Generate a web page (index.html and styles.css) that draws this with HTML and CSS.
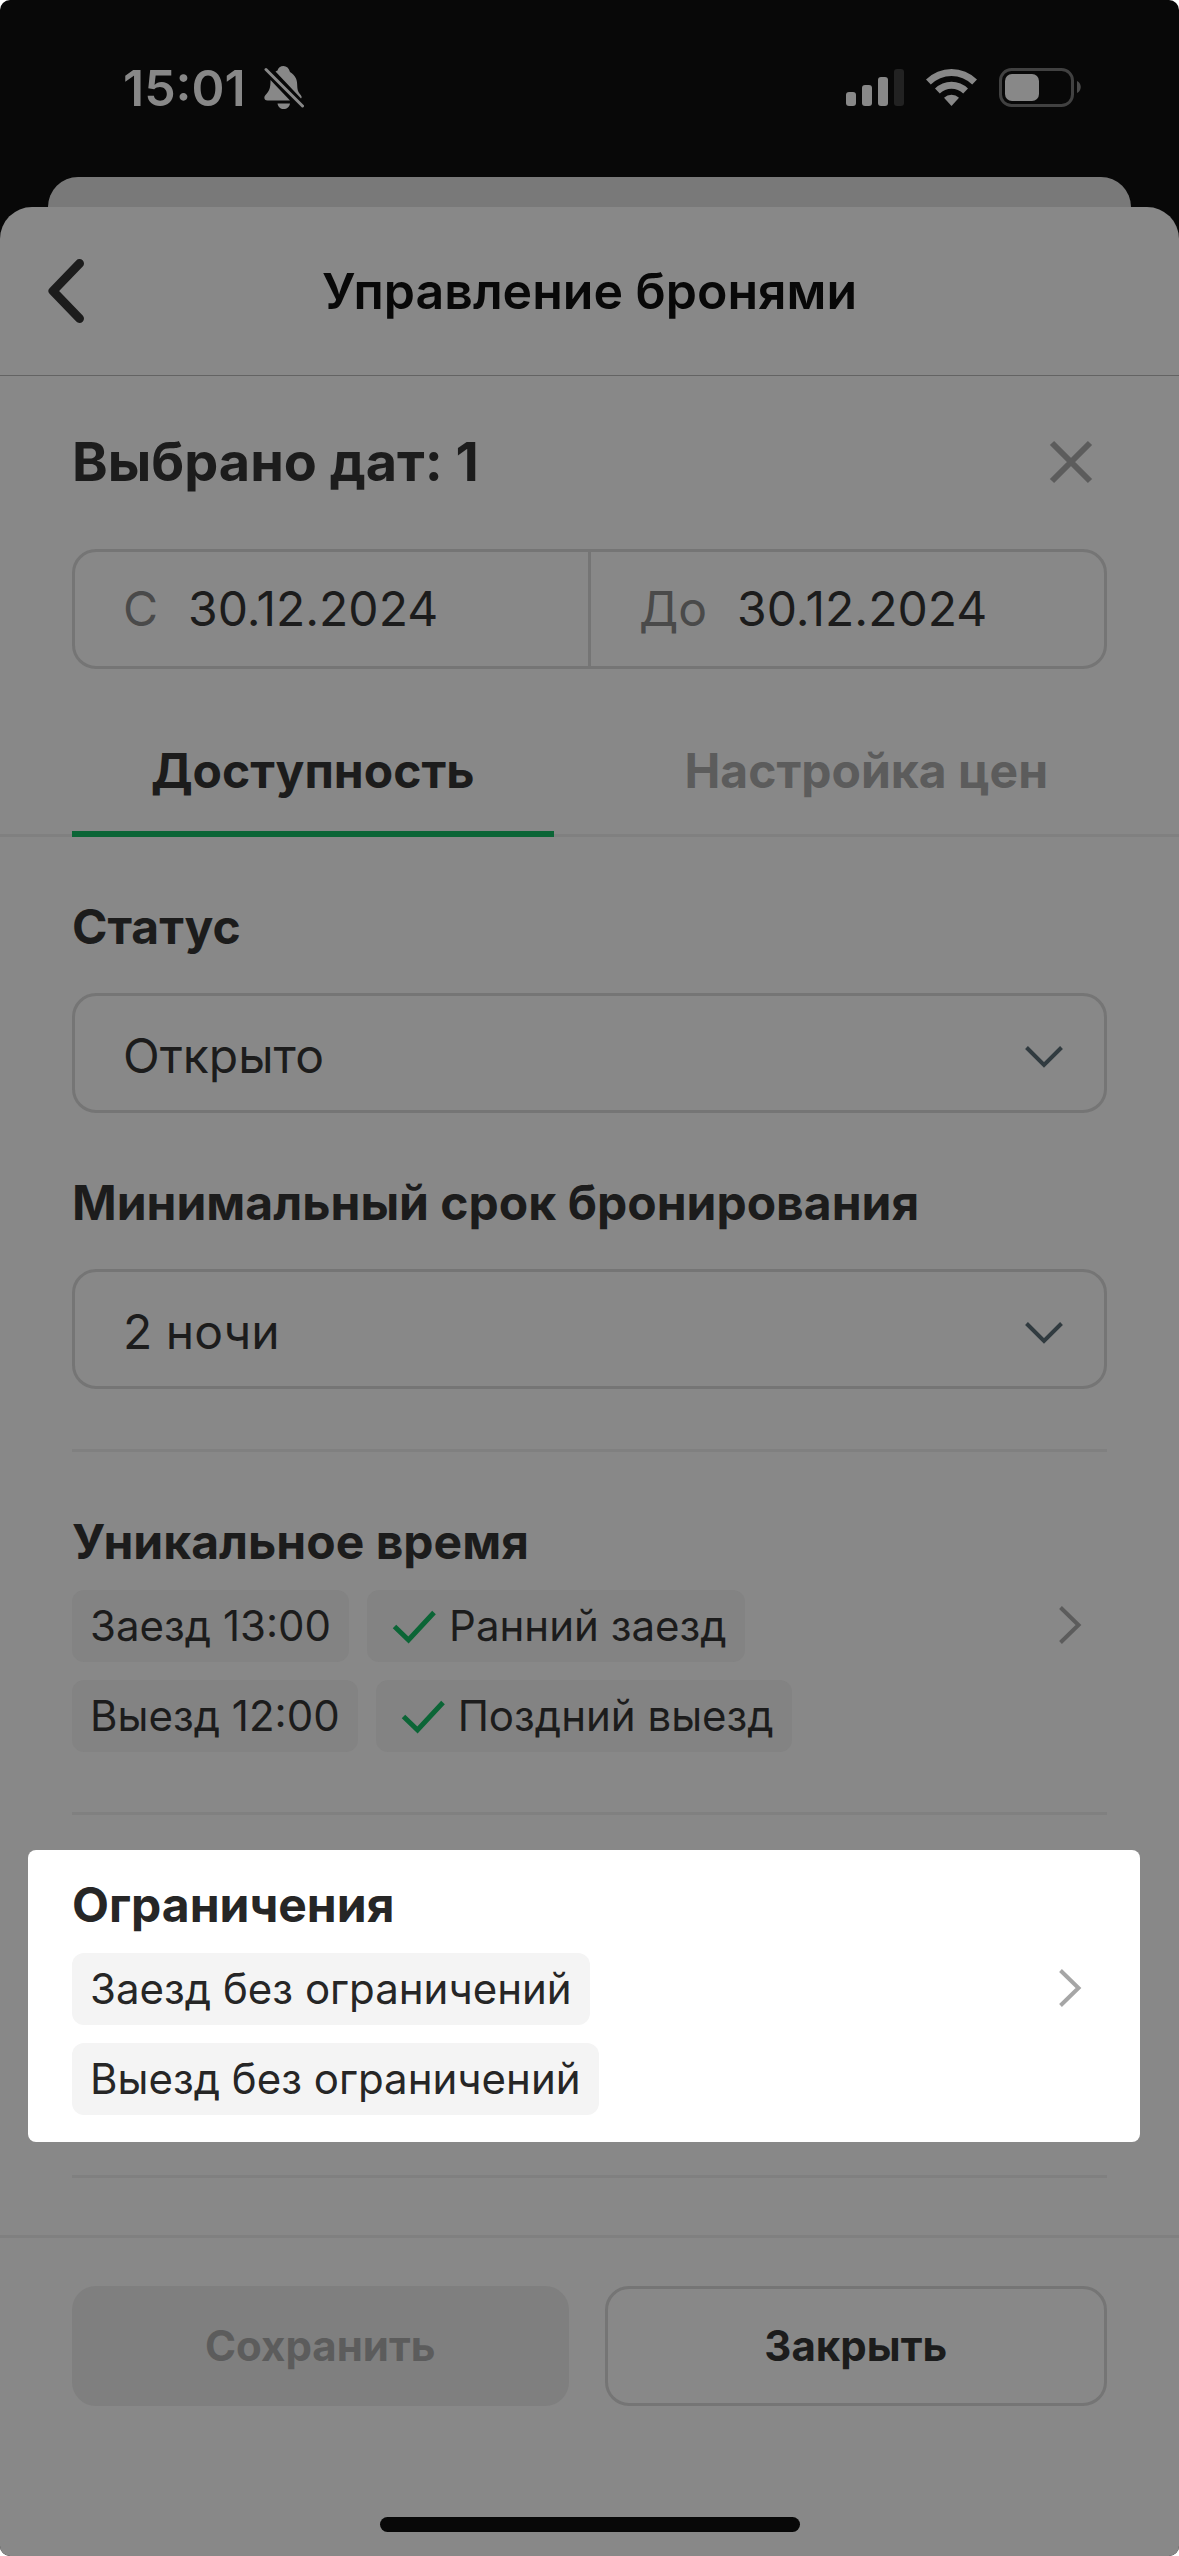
FILE: index.html
```
<!DOCTYPE html>
<html lang="ru">
<head>
    <meta charset="UTF-8">
    <meta name="viewport" content="width=device-width, initial-scale=1.0">
    <title>Управление бронями</title>
    <link rel="stylesheet" href="styles.css">
</head>
<body>
    <div class="screen">
        <div class="status-bar">
            <div class="status-left">
                <span class="clock">15:01</span>
                <svg class="bell" width="40" height="44" viewBox="0 0 40 44">
                    <path d="M19.500 0c-3 0-5.500 2-6 4.500l-2 1L37 32.500c2-2-1-4-2.500-6.500-2-4-.5-9-2.500-13.500-1.300-3-3.500-5-6-6.500C25 2 22.500 0 19.500 0zM6.500 14L26 34.500H3.500C0 34.500-.5 31 1.500 29c4-4 5-7 5-15zM13.500 37.500h12.500c-.5 3.500-3 5.500-6.300 5.500s-5.700-2-6.200-5.500z" fill="currentColor"/>
                    <path d="M2 3l36.500 37.500" stroke="#080808" stroke-width="7"/>
                    <path d="M2 3.500l36.500 36.500" stroke="currentColor" stroke-width="3" stroke-linecap="round"/>
                </svg>
            </div>
            <div class="status-right">
                <svg width="58" height="40" viewBox="0 0 58 40">
                    <rect x="0" y="24" width="10" height="14" rx="3" fill="currentColor"/>
                    <rect x="16" y="17" width="10" height="21" rx="3" fill="currentColor"/>
                    <rect x="32" y="9" width="10" height="29" rx="3" fill="currentColor"/>
                    <rect x="48" y="1" width="10" height="37" rx="3" fill="#222"/>
                </svg>
                <svg width="51" height="40" viewBox="0 0 51 40">
                    <path d="M0 11.500a36 36 0 0 1 51 0l-4.800 5a29.500 29.500 0 0 0-41.400 0z" fill="currentColor"/>
                    <path d="M9 20.500a23.500 23.500 0 0 1 33 0l-4.800 5a16.500 16.500 0 0 0-23.400 0z" fill="currentColor"/>
                    <path d="M18 29.800a10.800 10.800 0 0 1 15 0L25.500 38z" fill="currentColor"/>
                </svg>
                <svg width="83" height="40" viewBox="0 0 83 40">
                    <rect x="1.500" y="1.500" width="72" height="36" rx="11" fill="none" stroke="#414141" stroke-width="3"/>
                    <rect x="6" y="6" width="34" height="27" rx="7" fill="currentColor"/>
                    <path d="M78 13c5 2 5 10 0 12z" fill="#4a4a4a"/>
                </svg>
            </div>
        </div>

        <div class="sheet-back"></div>
        <main class="sheet">
            <header class="sheet-header">
                <button class="back-button" aria-label="Назад">
                    <svg width="36" height="64" viewBox="0 0 36 64">
                        <path d="M31.500 4.500L5 32l26.500 27.500" fill="none" stroke="currentColor" stroke-width="9" stroke-linecap="round" stroke-linejoin="round"/>
                    </svg>
                </button>
                <h1>Управление бронями</h1>
            </header>

            <div class="selection">
                <div class="selection-title">
                    <h2>Выбрано дат: 1</h2>
                    <button class="icon-button close-icon" aria-label="Сбросить">
                        <svg width="72" height="72" viewBox="0 0 72 72">
                            <path d="M17 17l38 38M55 17L17 55" fill="none" stroke="currentColor" stroke-width="6"/>
                        </svg>
                    </button>
                </div>
                <div class="dates">
                    <div class="date">
                        <label for="dateFrom">С</label>
                        <input type="text" id="dateFrom" value="30.12.2024">
                    </div>
                    <div class="date">
                        <label for="dateTo">До</label>
                        <input type="text" id="dateTo" value="30.12.2024">
                    </div>
                </div>
            </div>

            <div class="tabs">
                <button class="tab active">Доступность</button>
                <button class="tab">Настройка цен</button>
            </div>

            <div class="content">
                <div class="field">
                    <label for="status">Статус</label>
                    <div class="select">
                        <select id="status">
                            <option>Открыто</option>
                        </select>
                        <svg class="arrow" width="38" height="22" viewBox="0 0 38 22">
                            <path d="M1.500 1.500L19 19 36.500 1.500" fill="none" stroke="currentColor" stroke-width="4"/>
                        </svg>
                    </div>
                </div>
                <div class="field">
                    <label for="minStay">Минимальный срок бронирования</label>
                    <div class="select">
                        <select id="minStay">
                            <option>2 ночи</option>
                        </select>
                        <svg class="arrow" width="38" height="22" viewBox="0 0 38 22">
                            <path d="M1.500 1.500L19 19 36.500 1.500" fill="none" stroke="currentColor" stroke-width="4"/>
                        </svg>
                    </div>
                </div>

                <section class="row">
                    <div class="row-text">
                        <h3>Уникальное время</h3>
                        <div class="chips">
                            <span class="chip">Заезд 13:00</span>
                            <span class="chip">
                                <svg class="check" width="60" height="60" viewBox="0 0 60 60">
                                    <path d="M9.500 30.500L23.500 44 49 16.500" fill="none" stroke="currentColor" stroke-width="5"/>
                                </svg>
                                Ранний заезд
                            </span>
                        </div>
                        <div class="chips">
                            <span class="chip">Выезд 12:00</span>
                            <span class="chip">
                                <svg class="check" width="60" height="60" viewBox="0 0 60 60">
                                    <path d="M9.500 30.500L23.500 44 49 16.500" fill="none" stroke="currentColor" stroke-width="5"/>
                                </svg>
                                Поздний выезд
                            </span>
                        </div>
                    </div>
                    <button class="icon-button" aria-label="Уникальное время">
                        <svg width="72" height="72" viewBox="0 0 72 72">
                            <path d="M25.500 11.500L43.500 29 25.500 46.500" fill="none" stroke="currentColor" stroke-width="4"/>
                        </svg>
                    </button>
                </section>

                <section class="row spotlight">
                    <div class="row-text">
                        <h3>Ограничения</h3>
                        <div class="chips">
                            <span class="chip">Заезд без ограничений</span>
                        </div>
                        <div class="chips">
                            <span class="chip">Выезд без ограничений</span>
                        </div>
                    </div>
                    <button class="icon-button" aria-label="Ограничения">
                        <svg width="72" height="72" viewBox="0 0 72 72">
                            <path d="M25.500 11.500L43.500 29 25.500 46.500" fill="none" stroke="currentColor" stroke-width="4"/>
                        </svg>
                    </button>
                </section>
            </div>

            <footer class="sheet-footer">
                <div class="actions">
                    <button class="save-button" disabled>Сохранить</button>
                    <button class="cancel-button">Закрыть</button>
                </div>
                <div class="home-indicator"></div>
            </footer>
        </main>
    </div>
</body>
</html>
```
FILE: styles.css
```
* {
    box-sizing: border-box;
}
body {
    margin: 0;
    background-color: #fff;
    font-family: Inter, "Liberation Sans", sans-serif;
    font-size: 48px;
    line-height: 60px;
    color: #1c1c1c;
}
h1, h2, h3 {
    margin: 0;
    font-size: 48px;
    font-weight: 700;
}
button, input, select {
    margin: 0;
    padding: 0;
    border: none;
    background: none;
    font: inherit;
    color: inherit;
}
svg {
    display: block;
    flex: none;
}
.screen {
    display: flex;
    flex-direction: column;
    min-height: 100vh;
    background-color: #080808;
    border-radius: 10px;
    overflow: hidden;
}

/* status bar */
.status-bar {
    display: flex;
    justify-content: space-between;
    height: 177px;
    padding: 58px 97px 0 123px;
    color: #888;
}
.status-left, .status-right {
    display: flex;
    align-items: center;
    height: 60px;
}
.status-left {
    gap: 18px;
}
.status-right {
    gap: 22px;
}
.clock {
    font-size: 50px;
    font-weight: 600;
}

/* sheet */
.sheet-back {
    height: 60px;
    margin: 0 48px -30px;
    background-color: #797979;
    border-radius: 30px 30px 0 0;
}
.sheet {
    display: flex;
    flex-direction: column;
    flex: 1;
    background-color: #888;
    border-radius: 32px 32px 0 0;
}
.sheet-header {
    display: grid;
    grid-template-columns: 84px 1fr 84px;
    align-items: center;
    height: 169px;
    padding: 0 48px;
    border-bottom: 1px solid #636363;
}
.sheet-header h1 {
    font-size: 50px;
    font-weight: 600;
    color: #080808;
    text-align: center;
}
.back-button {
    justify-self: start;
}
.icon-button {
    flex: none;
    color: #5c5c5c;
}

/* dates */
.selection {
    padding: 50px 72px 42px;
}
.selection-title {
    display: flex;
    align-items: center;
    justify-content: space-between;
    margin-bottom: 51px;
}
.selection-title h2 {
    font-size: 54px;
}
.dates {
    display: flex;
    height: 120px;
    border: 3px solid #757575;
    border-radius: 24px;
}
.date {
    display: flex;
    flex: 1;
    align-items: center;
    gap: 30px;
    min-width: 0;
    padding: 0 48px;
}
.date + .date {
    border-left: 3px solid #757575;
}
.date label {
    color: #4a4a4a;
}
.date input {
    flex: 1;
    min-width: 0;
}

/* tabs */
.tabs {
    display: flex;
    gap: 72px;
    padding: 0 72px;
    box-shadow: inset 0 -3px #808080;
}
.tab {
    flex: 1;
    padding: 30px 0;
    border-bottom: 6px solid transparent;
    font-weight: 700;
    color: #5c5c5c;
}
.tab.active {
    border-color: #0b6536;
    color: #1c1c1c;
}

/* form */
.content {
    padding: 0 72px;
}
.field {
    padding-top: 60px;
}
.field label {
    display: block;
    margin-bottom: 36px;
    font-weight: 700;
}
.select {
    position: relative;
}
.select select {
    display: block;
    width: 100%;
    height: 120px;
    padding: 6px 48px 0;
    border: 3px solid #757575;
    border-radius: 24px;
    appearance: none;
}
.arrow {
    position: absolute;
    top: 53px;
    right: 44px;
    color: #313b40;
    pointer-events: none;
}

/* rows with chips */
.row {
    display: flex;
    align-items: center;
    justify-content: space-between;
    margin-top: 60px;
    padding: 60px 0;
    border-top: 3px solid #808080;
    border-bottom: 3px solid #808080;
}
.chips {
    display: flex;
    gap: 18px;
    margin-top: 18px;
}
.chip {
    display: flex;
    align-items: center;
    height: 72px;
    padding: 0 18px;
    border-radius: 12px;
    background-color: #838383;
    font-size: 42px;
}
.check {
    margin-right: 4px;
    color: #0b6536;
}
.spotlight {
    margin: 35px -33px 33px -44px;
    padding: 25px 33px 27px 44px;
    border: none;
    border-radius: 8px;
    background-color: #fff;
    color: #262626;
}
.spotlight .chip {
    background-color: #f4f4f4;
}
.spotlight .icon-button {
    color: #a6a6a6;
}
.content::after {
    content: "";
    display: block;
    height: 3px;
    background-color: #808080;
}

/* footer */
.sheet-footer {
    margin-top: auto;
    padding: 48px 72px 24px;
    border-top: 3px solid #808080;
}
.actions {
    display: flex;
    gap: 36px;
}
.actions button {
    flex: 1;
    height: 120px;
    border-radius: 24px;
    font-size: 42px;
    font-weight: 700;
}
.save-button {
    background-color: #7f7f7f;
    color: #5c5c5c;
}
.actions .cancel-button {
    border: 3px solid #757575;
}
.home-indicator {
    width: 420px;
    max-width: 100%;
    height: 15px;
    margin: 111px auto 0;
    border-radius: 8px;
    background-color: #080808;
}
```
